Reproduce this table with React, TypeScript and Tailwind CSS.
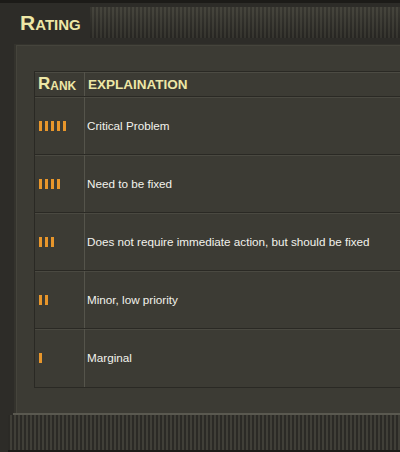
const rows = [
  { rank: 5, text: "Critical Problem" },
  { rank: 4, text: "Need to be fixed" },
  { rank: 3, text: "Does not require immediate action, but should be fixed" },
  { rank: 2, text: "Minor, low priority" },
  { rank: 1, text: "Marginal" },
];

const stripes =
  "bg-[repeating-linear-gradient(90deg,#2b2a26_0px,#2b2a26_2px,#403f38_2px,#403f38_4px)]";

function Bars({ count }: { count: number }) {
  return (
    <div className="flex gap-[3px] pl-[4px]">
      {Array.from({ length: count }).map((_, i) => (
        <span key={i} className="block h-[10px] w-[3px] bg-[#e8962b]" />
      ))}
    </div>
  );
}

export default function App() {
  return (
    <div className="flex h-[452px] w-[400px] flex-col overflow-hidden bg-[#2d2c28] font-['Liberation_Sans',Arial,sans-serif]">
      {/* Title bar */}
      <div className="flex h-[44px] shrink-0 border-t-[3px] border-[#1c1b18]">
        <h1 className="flex items-baseline pl-[20px] pt-[9px] font-bold leading-none text-[#eee7a6]">
          <span className="text-[21px]">R</span>
          <span className="text-[15px]">ATING</span>
        </h1>
        <div className={`ml-[9px] mt-[4px] h-[31px] flex-1 ${stripes}`}>
          <div className="h-full w-full bg-gradient-to-b from-[#56554a]/30 to-[#1c1b18]/30" />
        </div>
      </div>

      {/* Panel */}
      <div className="ml-[14px] flex-1 border-l-2 border-t border-[#34332d] bg-[#3c3b34] pl-[18px] pt-[26px] shadow-[inset_1px_1px_0_#45443c]">
        <div className="w-[420px] border border-[#2a2924] shadow-[inset_0_1px_0_#4c4b43]">
          {/* Header */}
          <div className="flex h-[25px] border-b border-[#2a2924] text-[#eee7a6]">
            <div className="flex w-[50px] items-end border-r border-[#55544b] pb-[4px] pl-[3px] font-bold leading-none">
              <span className="text-[17px]">R</span>
              <span className="text-[12px]">ANK</span>
            </div>
            <div className="flex items-end pb-[5px] pl-[3px] text-[13.5px] font-bold leading-none">
              EXPLAINATION
            </div>
          </div>
          {rows.map((r, i) => (
            <div
              key={r.rank}
              className={`flex h-[58px] ${i < rows.length - 1 ? "border-b border-[#2a2924]" : ""} shadow-[inset_0_1px_0_#4a4941]`}
            >
              <div className="flex w-[50px] items-center border-r border-[#55544b]">
                <Bars count={r.rank} />
              </div>
              <div className="flex items-center pl-[2px] text-[11.7px] text-[#f2f2ec]">
                {r.text}
              </div>
            </div>
          ))}
        </div>
      </div>

      {/* Footer */}
      <div className="flex h-[39px] shrink-0 flex-col pl-[8px]">
        <div className="ml-[5px] h-[2px] bg-[#5a5950]" />
        <div className={`flex-1 ${stripes}`} />
        <div className="h-[2px] bg-[#1c1b18]" />
      </div>
    </div>
  );
}
